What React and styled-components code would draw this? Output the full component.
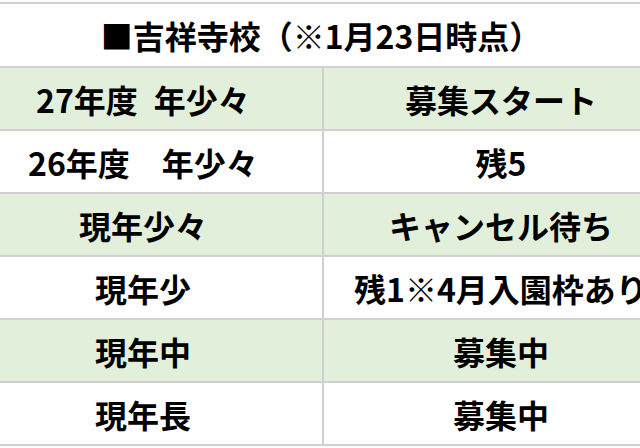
import React from "react";
import styled, { createGlobalStyle } from "styled-components";

const GlobalStyle = createGlobalStyle`
  html, body {
    margin: 0;
    padding: 0;
    background: #ffffff;
    overflow: hidden;
  }
  body {
    font-family: "Noto Sans CJK JP", "Noto Sans", sans-serif;
  }
`;

const Page = styled.div`
  width: 640px;
  height: 448px;
  overflow: hidden;
  padding-top: 2px;
  box-sizing: border-box;
`;

const Table = styled.table`
  margin-left: -38px;
  width: 716px;
  border-collapse: collapse;
  table-layout: fixed;
  color: #000000;
  font-weight: 700;
  font-size: 32px;
  line-height: 1;
`;

const TitleCell = styled.th`
  height: 62px;
  padding: 0;
  border: 2px solid #d0d0d0;
  border-left: none;
  border-right: none;
  background: #ffffff;
  text-align: center;
  font-weight: 700;
  white-space: nowrap;
`;

const Row = styled.tr`
  background: ${({ $shade }) => ($shade ? "#e2efda" : "#ffffff")};
`;

const Cell = styled.td`
  height: 61px;
  padding: 0;
  border: 2px solid #d0d0d0;
  text-align: center;
  white-space: nowrap;
  vertical-align: middle;
`;

const rows = [
  ["27年度\u2002年少々", "募集スタート"],
  ["26年度\u3000年少々", "残5"],
  ["現年少々", "キャンセル待ち"],
  ["現年少", "残1※4月入園枠あり"],
  ["現年中", "募集中"],
  ["現年長", "募集中"],
];

export default function App() {
  return (
    <>
      <GlobalStyle />
      <Page>
        <Table>
          <colgroup>
            <col style={{ width: 360 }} />
            <col style={{ width: 356 }} />
          </colgroup>
          <thead>
            <tr>
              <TitleCell colSpan={2}>■吉祥寺校（※1月23日時点）</TitleCell>
            </tr>
          </thead>
          <tbody>
            {rows.map(([grade, status], i) => (
              <Row key={grade} $shade={i % 2 === 0}>
                <Cell>{grade}</Cell>
                <Cell>{status}</Cell>
              </Row>
            ))}
          </tbody>
        </Table>
      </Page>
    </>
  );
}
